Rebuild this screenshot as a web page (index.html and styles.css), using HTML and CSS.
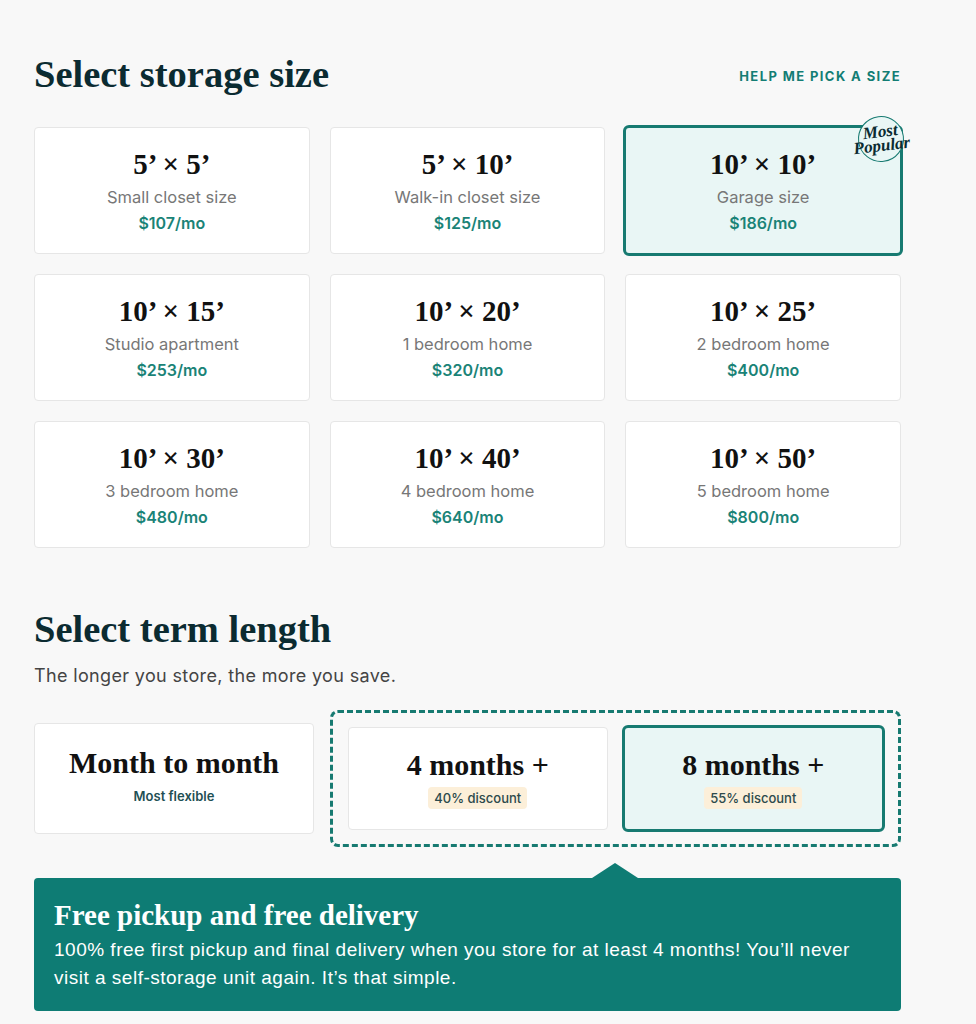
FILE: index.html
```html
<!DOCTYPE html>
<html lang="en">
<head>
  <meta charset="UTF-8">
  <meta name="viewport" content="width=device-width, initial-scale=1.0">
  <title>Select storage</title>
  <link rel="stylesheet" href="styles.css">
</head>
<body>
  <main class="page">
    <section class="size-section">
      <div class="section-head">
        <h1 class="section-title">Select storage size</h1>
        <a class="help-link" href="#">Help me pick a size</a>
      </div>

      <div class="size-grid">
        <div class="size-card">
          <div class="size-name">5’ × 5’</div>
          <div class="size-desc">Small closet size</div>
          <div class="size-price">$107/mo</div>
        </div>
        <div class="size-card">
          <div class="size-name">5’ × 10’</div>
          <div class="size-desc">Walk-in closet size</div>
          <div class="size-price">$125/mo</div>
        </div>
        <div class="size-card selected">
          <div class="popular-badge">Most<br>Popular</div>
          <div class="size-name">10’ × 10’</div>
          <div class="size-desc">Garage size</div>
          <div class="size-price">$186/mo</div>
        </div>
        <div class="size-card">
          <div class="size-name">10’ × 15’</div>
          <div class="size-desc">Studio apartment</div>
          <div class="size-price">$253/mo</div>
        </div>
        <div class="size-card">
          <div class="size-name">10’ × 20’</div>
          <div class="size-desc">1 bedroom home</div>
          <div class="size-price">$320/mo</div>
        </div>
        <div class="size-card">
          <div class="size-name">10’ × 25’</div>
          <div class="size-desc">2 bedroom home</div>
          <div class="size-price">$400/mo</div>
        </div>
        <div class="size-card">
          <div class="size-name">10’ × 30’</div>
          <div class="size-desc">3 bedroom home</div>
          <div class="size-price">$480/mo</div>
        </div>
        <div class="size-card">
          <div class="size-name">10’ × 40’</div>
          <div class="size-desc">4 bedroom home</div>
          <div class="size-price">$640/mo</div>
        </div>
        <div class="size-card">
          <div class="size-name">10’ × 50’</div>
          <div class="size-desc">5 bedroom home</div>
          <div class="size-price">$800/mo</div>
        </div>
      </div>
    </section>

    <section class="term-section">
      <h2 class="section-title">Select term length</h2>
      <p class="term-intro">The longer you store, the more you save.</p>

      <div class="term-row">
        <div class="term-card">
          <div class="term-name">Month to month</div>
          <div class="term-note">Most flexible</div>
        </div>
        <div class="term-group">
          <div class="term-card">
            <div class="term-name">4 months +</div>
            <span class="discount">40% discount</span>
          </div>
          <div class="term-card selected">
            <div class="term-name">8 months +</div>
            <span class="discount">55% discount</span>
          </div>
        </div>
      </div>

      <div class="perk">
        <h3 class="perk-title">Free pickup and free delivery</h3>
        <p class="perk-text">100% free first pickup and final delivery when you store for at least 4 months! You’ll never visit a self-storage unit again. It’s that simple.</p>
      </div>
    </section>
  </main>
</body>
</html>
```

FILE: styles.css
```css
body {
  margin: 0;
  padding: 0;
  background: #f8f8f8;
  font-family: Inter, 'Noto Sans', sans-serif;
  color: #333;
}

.page {
  width: 867px;
  margin-left: 34px;
  padding-top: 53px;
}

.section-head {
  display: flex;
  justify-content: space-between;
  align-items: center;
}

.section-title {
  margin: 0;
  font-family: 'Liberation Serif', serif;
  font-size: 38.5px;
  line-height: 42px;
  font-weight: 700;
  color: #0b2b31;
}

.help-link {
  padding-top: 3px;
  font-size: 13px;
  font-weight: 700;
  letter-spacing: 1.4px;
  text-transform: uppercase;
  color: #137d74;
  text-decoration: none;
}

.size-grid {
  display: grid;
  grid-template-columns: repeat(3, 1fr);
  gap: 20px;
  margin-top: 32px;
}

.size-card {
  position: relative;
  height: 127px;
  box-sizing: border-box;
  padding-top: 19px;
  background: #fff;
  border: 1px solid #e6e6e6;
  border-radius: 4px;
  text-align: center;
}

.size-card.selected,
.term-card.selected {
  border: 3px solid #177a71;
  background: #e9f6f5;
  border-radius: 6px;
}

.size-card.selected {
  margin: -2px;
  height: 131px;
  padding-top: 19px;
}

.size-name {
  font-family: 'Liberation Serif', serif;
  font-size: 29px;
  line-height: 34px;
  font-weight: 700;
  color: #111;
  margin-bottom: 3px;
}

.size-desc {
  font-size: 16.5px;
  line-height: 26px;
  color: #777;
}

.size-price {
  font-size: 16px;
  line-height: 26px;
  font-weight: 600;
  color: #1a8377;
}

.popular-badge {
  position: absolute;
  left: 232px;
  top: -12px;
  width: 44px;
  height: 44px;
  border: 1px solid #177a71;
  border-radius: 50%;
  background: #e9f6f5;
  font-family: 'Liberation Serif', serif;
  font-style: italic;
  font-weight: 700;
  font-size: 17px;
  line-height: 14px;
  color: #0b2b31;
  display: flex;
  align-items: center;
  justify-content: center;
  text-align: center;
  transform: rotate(-7deg);
}

.term-section {
  margin-top: 60px;
}

.term-intro {
  margin: 12px 0 0;
  font-size: 18px;
  line-height: 28px;
  letter-spacing: 0.35px;
  color: #444;
}

.term-row {
  display: flex;
  align-items: center;
  gap: 16px;
  margin-top: 20px;
}

.term-card {
  box-sizing: border-box;
  background: #fff;
  border: 1px solid #e6e6e6;
  border-radius: 4px;
  display: flex;
  flex-direction: column;
  align-items: center;
  justify-content: center;
}

.term-row > .term-card {
  width: 280px;
  height: 111px;
  padding-bottom: 8px;
}

.term-group {
  flex: 1;
  display: grid;
  grid-template-columns: 1fr 1fr;
  gap: 16px;
  padding: 14px 15px;
  border: 3px dashed #177a71;
  border-radius: 8px;
}

.term-group .term-card {
  height: 103px;
}

.term-group .term-card.selected {
  margin: -2px;
  height: 107px;
}

.term-name {
  font-family: 'Liberation Serif', serif;
  font-size: 30px;
  line-height: 34px;
  font-weight: 700;
  color: #111;
}

.term-note {
  margin-top: 8px;
  font-size: 13px;
  font-weight: 600;
  color: #1f5054;
}

.discount {
  margin-top: 5px;
  padding: 3px 6px;
  background: #fcefd9;
  border-radius: 4px;
  font-size: 13px;
  line-height: 16px;
  font-weight: 500;
  color: #2d4a4c;
}

.perk {
  position: relative;
  margin-top: 31px;
  padding: 20px 20px 19px;
  background: #0e7c74;
  border-radius: 4px;
  color: #fff;
}

.perk::before {
  content: "";
  position: absolute;
  top: -15px;
  left: 558px;
  border-left: 23px solid transparent;
  border-right: 23px solid transparent;
  border-bottom: 15px solid #0e7c74;
}

.perk-title {
  margin: 0;
  font-family: 'Liberation Serif', serif;
  font-size: 29px;
  line-height: 34px;
  font-weight: 700;
}

.perk-text {
  max-width: 810px;
  margin: 4px 0 0;
  font-family: 'Liberation Sans', sans-serif;
  font-size: 19px;
  line-height: 28px;
  letter-spacing: 0.5px;
}
```
